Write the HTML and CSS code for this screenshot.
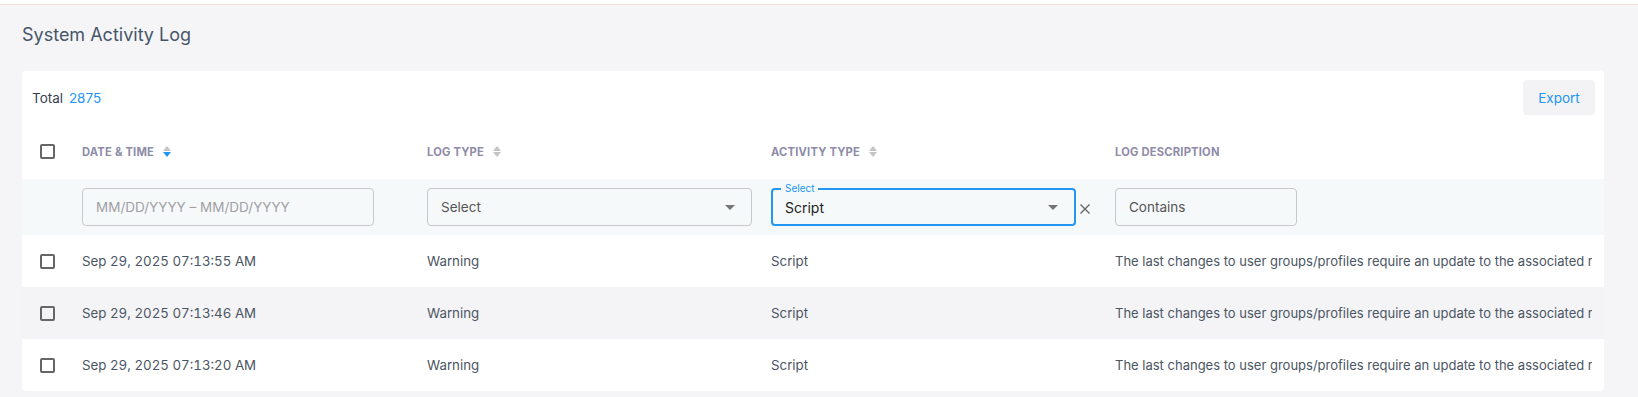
FILE: index.html
```html
<!DOCTYPE html>
<html>
  <head>
    <title>System Activity Log</title>
    <link rel="stylesheet" href="styles.css">
  </head>
  <body>
    <div class="topline"></div>
    <div class="page">
      <h1>System Activity Log</h1>
      <div class="card">
        <div class="toolbar">
          <div class="total">Total <span class="count">2875</span></div>
          <button class="export">Export</button>
        </div>

        <div class="row head">
          <div class="cell"><span class="check"></span></div>
          <div class="cell">DATE &amp; TIME <span class="sort active"><i class="up"></i><i class="down"></i></span></div>
          <div class="cell">LOG TYPE <span class="sort"><i class="up"></i><i class="down"></i></span></div>
          <div class="cell">ACTIVITY TYPE <span class="sort"><i class="up"></i><i class="down"></i></span></div>
          <div class="cell">LOG DESCRIPTION</div>
        </div>

        <div class="row filters">
          <div class="cell"></div>
          <div class="cell"><div class="field date placeholder">MM/DD/YYYY – MM/DD/YYYY</div></div>
          <div class="cell"><div class="field select logtype">Select<span class="caret"></span></div></div>
          <div class="cell">
            <div class="field select focused">
              <span class="legend">Select</span>
              Script<span class="caret"></span>
            </div>
            <span class="clear">
              <svg width="12" height="12" viewBox="0 0 12 12"><path d="M1.5 1.5 L10.5 10.5 M10.5 1.5 L1.5 10.5" stroke="#666" stroke-width="1.4" fill="none"/></svg>
            </span>
          </div>
          <div class="cell"><div class="field contains">Contains</div></div>
        </div>

        <div class="row data">
          <div class="cell"><span class="check"></span></div>
          <div class="cell stamp">Sep 29, 2025 07:13:55 AM</div>
          <div class="cell">Warning</div>
          <div class="cell">Script</div>
          <div class="cell desc">The last changes to user groups/profiles require an update to the associated records</div>
        </div>
        <div class="row data alt">
          <div class="cell"><span class="check"></span></div>
          <div class="cell stamp">Sep 29, 2025 07:13:46 AM</div>
          <div class="cell">Warning</div>
          <div class="cell">Script</div>
          <div class="cell desc">The last changes to user groups/profiles require an update to the associated records</div>
        </div>
        <div class="row data">
          <div class="cell"><span class="check"></span></div>
          <div class="cell stamp">Sep 29, 2025 07:13:20 AM</div>
          <div class="cell">Warning</div>
          <div class="cell">Script</div>
          <div class="cell desc">The last changes to user groups/profiles require an update to the associated records</div>
        </div>
      </div>
    </div>
  </body>
</html>
```

FILE: styles.css
```css
body {
  font-family: Inter, "Liberation Sans", Arial, sans-serif;
  background-color: #f5f5f7;
  margin: 0;
  color: #4b5563;
  overflow: hidden;
}

.topline {
  height: 4px;
  background-color: #fff;
  border-bottom: 1px solid #f3ded4;
}

.page {
  padding: 0 34px 0 22px;
}

h1 {
  margin: 18px 0 0;
  font-size: 18px;
  line-height: 24px;
  font-weight: 400;
  color: #475569;
}

.card {
  margin-top: 24px;
  background-color: #fff;
  border-radius: 4px;
  overflow: hidden;
}

.toolbar {
  display: flex;
  align-items: center;
  justify-content: space-between;
  height: 53px;
  padding: 0 9px 0 10px;
}

.total {
  font-size: 13.5px;
  color: #374151;
}

.count {
  color: #2196f3;
  margin-left: 2px;
}

.export {
  width: 72px;
  height: 35px;
  border: none;
  border-radius: 4px;
  background-color: #f3f3f5;
  color: #2196f3;
  font-family: inherit;
  font-size: 13.5px;
  cursor: pointer;
}

.row {
  display: grid;
  grid-template-columns: 60px 345px 344px 344px 1fr;
  align-items: center;
}

.cell {
  display: flex;
  align-items: center;
  white-space: nowrap;
  overflow: hidden;
}

.row .cell:first-child {
  padding-left: 18px;
}

.check {
  display: inline-block;
  width: 11px;
  height: 11px;
  border: 2px solid #666;
  border-radius: 2px;
}

.head {
  height: 55px;
  font-size: 11.2px;
  font-weight: 700;
  letter-spacing: 0.2px;
  color: #8e8ca8;
}

.sort {
  display: inline-flex;
  flex-direction: column;
  gap: 1px;
  margin-left: 9px;
}

.sort i {
  width: 0;
  height: 0;
  border-left: 4px solid transparent;
  border-right: 4px solid transparent;
}

.sort .up {
  border-bottom: 5px solid #c4c4c8;
}

.sort .down {
  border-top: 5px solid #c4c4c8;
}

.sort.active .down {
  border-top-color: #2196f3;
}

.filters {
  height: 56px;
  background-color: #f6f9fa;
}

.filters .cell {
  overflow: visible;
}

.field {
  position: relative;
  box-sizing: border-box;
  height: 38px;
  display: flex;
  align-items: center;
  padding: 0 13px;
  border: 1px solid #c8c8cc;
  border-radius: 4px;
  font-size: 13.5px;
  color: #555;
}

.date {
  width: 292px;
}

.placeholder {
  color: #a0a0a4;
}

.logtype {
  width: 325px;
}

.contains {
  width: 182px;
}

.select {
  justify-content: space-between;
}

.caret {
  width: 0;
  height: 0;
  border-left: 5px solid transparent;
  border-right: 5px solid transparent;
  border-top: 5px solid #757575;
  margin-right: 3px;
}

.focused {
  width: 305px;
  border: 2px solid #2196f3;
  color: #222;
  font-size: 14px;
  padding-left: 12px;
}

.legend {
  position: absolute;
  top: -8px;
  left: 8px;
  padding: 0 4px;
  background-color: #f6f9fa;
  color: #2196f3;
  font-size: 10px;
  line-height: 12px;
}

.clear {
  display: flex;
  margin: 4px 0 0 3px;
}

.data {
  height: 52px;
  font-size: 13.3px;
  color: #4b5563;
}

.stamp {
  font-variant-numeric: tabular-nums;
}

.alt {
  background-color: #f4f4f6;
}

.desc {
  display: block;
  overflow: hidden;
  margin-right: 12px;
  font-size: 13px;
}
```
